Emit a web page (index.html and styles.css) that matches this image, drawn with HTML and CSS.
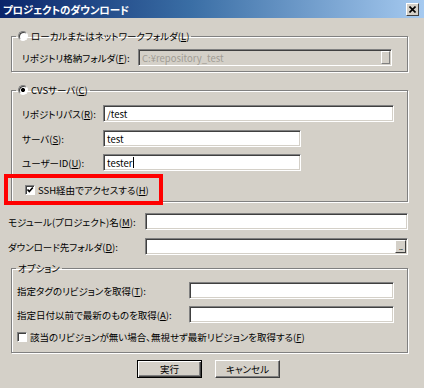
FILE: index.html
```html
<!DOCTYPE html>
<html lang="ja">
<head>
    <meta charset="UTF-8">
    <title>プロジェクトのダウンロード</title>
    <link rel="stylesheet" href="styles.css">
</head>
<body>
    <div class="dialog">
        <div class="titlebar">
            <span class="title">プロジェクトのダウンロード</span>
            <span class="close">
                <svg width="7" height="7" viewBox="0 0 7 7"><path d="M0.5 0.5 L6.5 6.5 M6.5 0.5 L0.5 6.5" stroke="#000" stroke-width="1.6"/></svg>
            </span>
        </div>

        <div class="content">
            <fieldset class="group group-local">
                <legend><span class="radio"></span>ローカルまたはネットワークフォルダ(<u>L</u>)</legend>
                <div class="group-body">
                    <div class="row">
                        <label class="label">リポジトリ格納フォルダ(<u>F</u>):</label>
                        <div class="field disabled">
                            <span class="value">C:¥repository_test</span>
                            <span class="browse small"></span>
                        </div>
                    </div>
                </div>
            </fieldset>

            <fieldset class="group group-cvs">
                <legend><span class="radio checked"></span>CVSサーバ(<u>C</u>)</legend>
                <div class="group-body">
                    <div class="row">
                        <label class="label">リポジトリパス(<u>R</u>):</label>
                        <div class="field wide"><span class="value">/test</span></div>
                    </div>
                    <div class="row">
                        <label class="label">サーバ(<u>S</u>):</label>
                        <div class="field short"><span class="value">test</span></div>
                    </div>
                    <div class="row">
                        <label class="label">ユーザーID(<u>U</u>):</label>
                        <div class="field short"><span class="value">tester</span><span class="caret"></span></div>
                    </div>
                    <div class="ssh-row">
                        <span class="checkbox checked"></span>
                        <span>SSH経由でアクセスする(<u>H</u>)</span>
                    </div>
                </div>
            </fieldset>

            <div class="row row-module">
                <label class="label">モジュール(プロジェクト)名(<u>M</u>):</label>
                <div class="field module"></div>
            </div>
            <div class="row row-dest">
                <label class="label">ダウンロード先フォルダ(<u>D</u>):</label>
                <div class="field dest"><span class="browse">...</span></div>
            </div>

            <fieldset class="group group-options">
                <legend>オプション</legend>
                <div class="group-body">
                    <div class="row">
                        <label class="label">指定タグのリビジョンを取得(<u>T</u>):</label>
                        <div class="field"></div>
                    </div>
                    <div class="row">
                        <label class="label">指定日付以前で最新のものを取得(<u>A</u>):</label>
                        <div class="field"></div>
                    </div>
                    <div class="check-row">
                        <span class="checkbox"></span>
                        <span>該当のリビジョンが無い場合、無視せず最新リビジョンを取得する(<u>F</u>)</span>
                    </div>
                </div>
            </fieldset>

            <div class="buttons">
                <button class="btn default">実行</button>
                <button class="btn">キャンセル</button>
            </div>
        </div>
    </div>
</body>
</html>
```

FILE: styles.css
```css
body {
    margin: 0;
    background-color: #d4d0c8;
    font-family: "Noto Sans CJK JP", sans-serif;
    font-size: 9.5px;
    font-feature-settings: "palt";
    color: #000;
}

u {
    text-underline-offset: 1px;
}

/* Title bar */
.titlebar {
    height: 18px;
    display: flex;
    align-items: center;
    justify-content: space-between;
    padding: 0 5px 0 3px;
    background: linear-gradient(to right, #0a246a, #3a6ea5 45%, #a6caf0);
}

.title {
    color: #fff;
    font-weight: bold;
    font-size: 10.5px;
    letter-spacing: -0.2px;
}

.close {
    width: 11px;
    height: 11px;
    display: flex;
    align-items: center;
    justify-content: center;
    background-color: #d4d0c8;
    border: 1px solid;
    border-color: #fff #404040 #404040 #fff;
}

/* Content */
.content {
    padding: 0 16px 0 11px;
}

.group {
    margin: 0;
    padding: 0;
    min-width: 0;
    border: 1px solid #808080;
    box-shadow: inset 1px 1px 0 #fff, 1px 1px 0 #fff;
}

.group legend {
    height: 14px;
    line-height: 14px;
    margin-left: 4px;
    padding: 0 2px;
}

.group-local {
    margin-top: 11px;
}

.group-local .group-body {
    padding: 6px 0 5px 10px;
}

.group-cvs {
    margin-top: 11px;
}

.group-cvs .group-body {
    padding: 8px 0 0 10px;
}

.group-options {
    margin-top: 6px;
}

.group-options .group-body {
    padding: 7px 0 7px 5px;
}

.row {
    display: flex;
    align-items: center;
    height: 17px;
}

.label {
    flex-shrink: 0;
    white-space: nowrap;
}

.group-local .label { width: 116px; }
.group-cvs .label { width: 81px; }
.group-options .label { width: 172px; }
.row-module .label,
.row-dest .label { width: 137px; }

.group-cvs .row + .row { margin-top: 8px; }
.group-cvs .row:nth-child(3) { margin-top: 7px; }
.group-options .row + .row { margin-top: 7px; }

.row-module {
    margin: 11px 0 0 -3px;
}

.row-dest {
    margin: 8px 0 0 -3px;
}

/* Sunken edit box */
.field {
    box-sizing: border-box;
    height: 17px;
    width: 205px;
    display: flex;
    align-items: center;
    padding: 0 3px;
    background-color: #fff;
    border: 1px solid;
    border-color: #808080 #fff #fff #808080;
    box-shadow: inset 1px 1px 0 #404040, inset -1px -1px 0 #d4d0c8;
}

.field.disabled {
    width: 254px;
    background-color: #d4d0c8;
    color: #a09c94;
    justify-content: space-between;
    padding-right: 1px;
}

.field.wide { width: 291px; }
.field.short { width: 198px; }
.field.module { width: 264px; }
.field.dest {
    width: 263px;
    justify-content: flex-end;
    padding-right: 1px;
}

.caret {
    width: 1px;
    height: 11px;
    margin-left: 1px;
    background-color: #000;
}

.browse {
    box-sizing: border-box;
    width: 11px;
    height: 13px;
    display: flex;
    align-items: center;
    justify-content: center;
    font-size: 8px;
    line-height: 8px;
    letter-spacing: -1px;
    color: #404040;
    background-color: #d4d0c8;
    border: 1px solid;
    border-color: #fff #404040 #404040 #fff;
}

.browse.small {
    width: 9px;
    border-color: #fff #808080 #808080 #fff;
}

/* Radio & checkbox */
.radio {
    display: inline-block;
    box-sizing: border-box;
    width: 10px;
    height: 10px;
    margin-right: 3px;
    vertical-align: -1px;
    border-radius: 50%;
    background-color: #fff;
    border: 1px solid;
    border-color: #808080 #fff #fff #808080;
    box-shadow: inset 1px 1px 0 #404040;
}

.radio.checked {
    background: radial-gradient(circle, #000 0 1.8px, #fff 2.3px);
}

.checkbox {
    box-sizing: border-box;
    width: 10px;
    height: 10px;
    flex-shrink: 0;
    background-color: #fff;
    border: 1px solid;
    border-color: #808080 #fff #fff #808080;
    box-shadow: inset 1px 1px 0 #404040;
}

.checkbox.checked {
    background-image: url("data:image/svg+xml,%3Csvg xmlns='http://www.w3.org/2000/svg' width='8' height='8'%3E%3Cpath d='M1.5 3.5 L3.3 5.5 L6.8 1.5' fill='none' stroke='%23000' stroke-width='1.6'/%3E%3C/svg%3E");
    background-repeat: no-repeat;
    background-position: center;
}

/* Red highlight around the SSH option */
.ssh-row {
    box-sizing: border-box;
    width: 151px;
    height: 23px;
    margin: 7px 0 0 -14px;
    padding-left: 17px;
    display: flex;
    align-items: center;
    gap: 3px;
    outline: 4px solid #f00;
}

.check-row {
    height: 16px;
    margin-top: 6px;
    display: flex;
    align-items: center;
    gap: 3px;
}

/* Buttons */
.buttons {
    display: flex;
    gap: 13px;
    margin-top: 7px;
    padding-left: 126px;
}

.btn {
    box-sizing: border-box;
    width: 65px;
    height: 18px;
    padding: 0;
    font-family: inherit;
    font-size: 9.5px;
    font-feature-settings: "palt";
    background-color: #d4d0c8;
    border: 1px solid;
    border-color: #fff #404040 #404040 #fff;
    box-shadow: inset -1px -1px 0 #808080;
}

.btn.default {
    border-color: #000;
    box-shadow: inset 1px 1px 0 #fff, inset -1px -1px 0 #404040, inset -2px -2px 0 #808080;
}
```
